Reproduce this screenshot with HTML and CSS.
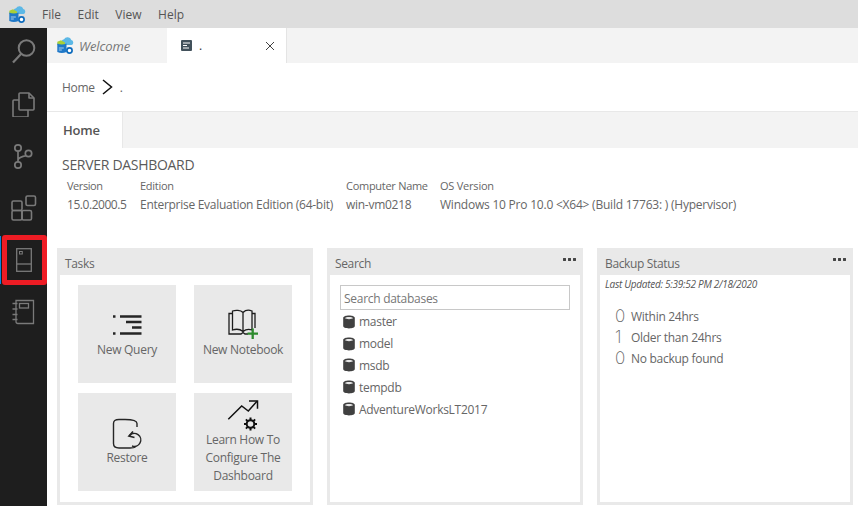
FILE: index.html
```html
<!DOCTYPE html>
<html lang="en">
<head>
<meta charset="utf-8">
<title>Server Dashboard</title>
<link rel="stylesheet" href="styles.css">
</head>
<body>
<svg class="defs" width="0" height="0" aria-hidden="true">
  <defs>
    <symbol id="logo" viewBox="0 0 17 17">
      <path d="M5.500 8A3.200 3.200 0 0 1 7 2.300 4 4 0 0 1 14.300 3 2.600 2.600 0 0 1 14.500 8z" fill="#5cb8e6"/>
      <path d="M.3 4.800 4 3.300 8 5.500V8H.3z" fill="#a9cf38"/>
      <path d="M.3 6.500Q4.800 8.500 9.500 6.500V15Q4.800 17.200.3 15z" fill="#1f78c8"/>
      <path d="M1.800 11h5M1.800 13h3" stroke="#cfe6f7" stroke-width=".8"/>
      <circle cx="12.500" cy="13.500" r="2.600" fill="#fff" stroke="#0f6cbd" stroke-width="1.700"/>
    </symbol>
    <symbol id="db" viewBox="0 0 14 14">
      <path d="M1.200 3C1.200 1.500 3.800.6 7 .6s5.800.9 5.800 2.400v8c0 1.500-2.600 2.400-5.800 2.400s-5.800-.9-5.800-2.400z" fill="#404040"/>
      <path d="M2.800 3.100C3.500 2.500 5 2 7 2s3.500.5 4.200 1.100C10.500 3.800 9 4.200 7 4.200S3.500 3.800 2.800 3.100z" fill="#e8e8e8"/>
    </symbol>
  </defs>
</svg>
<header class="menubar">
  <svg class="menu-logo"><use href="#logo"/></svg>
  <span class="menu-item">File</span>
  <span class="menu-item">Edit</span>
  <span class="menu-item">View</span>
  <span class="menu-item">Help</span>
</header>
<div class="app">
  <nav class="activity">
    <div class="act">
      <svg width="28" height="28" viewBox="0 0 28 28" fill="none" stroke="#7a7a7a" stroke-width="2"><circle cx="16.500" cy="10" r="7.800"/><path d="M11 16 3 24.500" stroke-width="2.200"/></svg>
    </div>
    <div class="act">
      <svg width="26" height="26" viewBox="0 0 26 26" fill="none" stroke="#7a7a7a" stroke-width="1.600" stroke-linejoin="round"><path d="M8 3a1 1 0 0 1 1-1h9l5 5v11a1 1 0 0 1-1 1h-13a1 1 0 0 1-1-1z"/><path d="M18 2v5h5"/><path d="M8 9H3a1 1 0 0 0-1 1v15a1 1 0 0 0 1 1h13a1 1 0 0 0 1-1v-6"/></svg>
    </div>
    <div class="act">
      <svg width="24" height="28" viewBox="0 0 24 28" fill="none" stroke="#7a7a7a" stroke-width="1.700"><circle cx="6" cy="6" r="3.200"/><circle cx="6" cy="23" r="3.200"/><circle cx="16.500" cy="11.500" r="3.200"/><path d="M6 9.200v10.600M6 18.500c0-3.500 4-3.500 8-5"/></svg>
    </div>
    <div class="act">
      <svg width="26" height="26" viewBox="0 0 26 26" fill="none" stroke="#7a7a7a" stroke-width="1.600" stroke-linejoin="round"><rect x="1" y="6" width="10" height="9.500" rx="1.500"/><rect x="1" y="15.500" width="10" height="9.500" rx="1.500"/><rect x="11" y="15.500" width="9.500" height="9.500" rx="1.500"/><rect x="15" y="1" width="9.500" height="9.500" rx="1.500"/></svg>
    </div>
    <div class="act act-current">
      <svg width="16" height="24" viewBox="0 0 16 24" fill="none" stroke="#7a7a7a" stroke-width="1.300"><rect x=".7" y=".7" width="14.600" height="22.600"/><path d="M.7 16h14.600"/><rect x="3.500" y="3.500" width="2.800" height="2.500" stroke-width="1"/></svg>
    </div>
    <div class="act">
      <svg width="24" height="26" viewBox="0 0 24 26" fill="none" stroke="#7a7a7a" stroke-width="1.300"><path d="M4 1.500h17.500v23h-15.500a2 2 0 0 1-2-2z"/><rect x="7.500" y="4.500" width="9" height="4.500"/><path d="M.5 4.500h5M.5 10h5M.5 15.500h5M.5 20.500h5"/></svg>
    </div>
  </nav>
  <main class="editor">
    <div class="tabs">
      <div class="tab tab-welcome">
        <svg class="tab-logo"><use href="#logo"/></svg>
        <span>Welcome</span>
      </div>
      <div class="tab tab-active">
        <svg width="11" height="11" viewBox="0 0 11 11"><rect width="11" height="11" rx="1" fill="#42515b"/><path d="M2 3h7M2 5.500h4M2 8h6" stroke="#fff"/></svg>
        <span class="tab-name">.</span>
        <svg class="tab-close" width="10" height="10" viewBox="0 0 10 10" stroke="#424242" stroke-width="1"><path d="M1 1l8 8M9 1l-8 8"/></svg>
      </div>
    </div>
    <div class="crumbs">
      <span>Home</span>
      <svg width="11" height="16" viewBox="0 0 11 16" fill="none" stroke="#111" stroke-width="1.500"><path d="M1 1l8.500 7-8.500 7"/></svg>
      <span>.</span>
    </div>
    <div class="subtabs"><div class="subtab">Home</div></div>
    <section class="summary">
      <h1>SERVER DASHBOARD</h1>
      <div class="props">
        <div class="prop prop-version"><span>Version</span><span>15.0.2000.5</span></div>
        <div class="prop prop-edition"><span>Edition</span><span>Enterprise Evaluation Edition (64-bit)</span></div>
        <div class="prop prop-computer"><span>Computer Name</span><span>win-vm0218</span></div>
        <div class="prop prop-os"><span>OS Version</span><span>Windows 10 Pro 10.0 &lt;X64&gt; (Build 17763: ) (Hypervisor)</span></div>
      </div>
    </section>
    <section class="widgets">
      <article class="widget">
        <div class="widget-head"><span>Tasks</span></div>
        <div class="widget-body tasks">
          <div class="task">
            <svg class="task-icon" viewBox="0 0 32 30" fill="none" stroke="#252525" stroke-width="2.300"><path d="M2 9.500h2.500M2 26.500h2.500"/><path d="M9 9.500h21.500M15 15h15.500M21 20.500h9.500M9 26.500h21.500"/></svg>
            <span>New Query</span>
          </div>
          <div class="task">
            <svg class="task-icon" viewBox="0 0 32 30" fill="none" stroke="#1c1c1c" stroke-width="1.300"><path d="M16 5.500C13.500 3 8.500 3 5.500 4v19c3-1 7.500-1 10.500 1.500 3-2.500 6.500-2.500 9-1.500V4c-2.500-1-6.500-1-9 1.500zM16 5.500v19"/><path d="M5.500 6.500H2V27h12l2-1.500 2 1.500h3"/><path d="M25 6.500h3V21"/><path d="M25.700 21.500v10.500M20.500 26.700h10.500" stroke="#2d8a2d" stroke-width="2.300"/></svg>
            <span>New Notebook</span>
          </div>
          <div class="task">
            <svg class="task-icon" viewBox="0 0 32 30" fill="none" stroke="#252525" stroke-width="1.400"><path d="M26 12V8.500C26 5.500 22 4.500 14 4.500H8C4 4.500 2.500 6 2.500 8.500v20C2.500 32 5 33 8 33h11c3 0 4.500-.3 5.500-1"/><path d="M18.500 20.500A6.500 6.500 0 1 1 21 31"/><path d="M22 16.500l-4 4.500 5.500 1.500" stroke-width="1.700"/></svg>
            <span>Restore</span>
          </div>
          <div class="task task-learn">
            <svg class="task-icon" viewBox="0 0 34 30" fill="none" stroke="#111" stroke-width="1.500"><path d="M2.300 20.300 15.700 7l6.600 5L31 2.300"/><path d="M23 2h8.500v7.700"/><path d="M24.500 18.500v13M18 25h13M19.900 20.400l9.200 9.200M29.100 20.400l-9.200 9.200" stroke-width="2"/><circle cx="24.500" cy="25" r="3.800" fill="#e9e9e9" stroke-width="2"/></svg>
            <span>Learn How To<br>Configure The<br>Dashboard</span>
          </div>
        </div>
      </article>
      <article class="widget">
        <div class="widget-head"><span>Search</span><span class="dots"></span></div>
        <div class="widget-body search">
          <input class="search-box" type="text" placeholder="Search databases">
          <ul class="dbs">
            <li><svg class="db"><use href="#db"/></svg>master</li>
            <li><svg class="db"><use href="#db"/></svg>model</li>
            <li><svg class="db"><use href="#db"/></svg>msdb</li>
            <li><svg class="db"><use href="#db"/></svg>tempdb</li>
            <li><svg class="db"><use href="#db"/></svg>AdventureWorksLT2017</li>
          </ul>
        </div>
      </article>
      <article class="widget">
        <div class="widget-head"><span>Backup Status</span><span class="dots"></span></div>
        <div class="widget-body backup">
          <p class="updated">Last Updated: 5:39:52 PM 2/18/2020</p>
          <div class="stats">
            <div class="stat"><b>0</b><span>Within 24hrs</span></div>
            <div class="stat"><b>1</b><span>Older than 24hrs</span></div>
            <div class="stat"><b>0</b><span>No backup found</span></div>
          </div>
        </div>
      </article>
    </section>
  </main>
</div>
</body>
</html>
```
FILE: styles.css
```css
* { box-sizing: border-box; }
html, body { margin: 0; height: 100%; }
body {
  width: 858px;
  height: 506px;
  overflow: hidden;
  display: flex;
  flex-direction: column;
  font-family: "Open Sans", "Noto Sans", sans-serif;
  font-size: 12px;
  letter-spacing: -0.28px;
  color: #666;
  background: #fff;
}
.defs { position: absolute; }

.menubar {
  flex: 0 0 28px;
  display: flex;
  align-items: center;
  background: #dddddd;
  padding-left: 9px;
  color: #555;
  letter-spacing: 0;
}
.menu-logo { width: 17px; height: 17px; margin-right: 16px; }
.menu-item { margin-right: 16.5px; }

.app { flex: 1; display: flex; min-height: 0; }

.activity {
  flex: 0 0 47px;
  background: #1e1e1e;
  display: flex;
  flex-direction: column;
  gap: 4px;
}
.act {
  position: relative;
  height: 48px;
  display: flex;
  align-items: center;
  justify-content: center;
}
.act-current { box-shadow: inset 1px 0 0 #0a84e0; }
.act-current::after {
  content: "";
  position: absolute;
  left: 2px;
  right: 0;
  top: -1px;
  bottom: -1px;
  border: 5.500px solid #ed1c24;
  border-radius: 3px;
}

.editor { flex: 1; min-width: 0; display: flex; flex-direction: column; }

.tabs { flex: 0 0 35px; display: flex; background: #f3f3f3; }
.tab {
  width: 120px;
  display: flex;
  align-items: center;
  border-right: 1px solid #f3f3f3;
}
.tab-welcome {
  padding-left: 10px;
  gap: 5px;
  font-size: 13px;
  font-style: italic;
  letter-spacing: -0.1px;
  color: #777;
}
.tab-logo { width: 17px; height: 17px; }
.tab-active {
  width: 120px;
  background: #fff;
  border-right: 1px solid #e4e4e4;
  padding: 0 11px 0 14px;
  color: #333;
}
.tab-name { margin-left: 7px; flex: 1; }

.crumbs {
  flex: 0 0 49px;
  display: flex;
  align-items: center;
  gap: 7px;
  padding-left: 15px;
  border-bottom: 1px solid #e8e8e8;
}

.subtabs { flex: 0 0 36px; background: #f3f3f3; display: flex; }
.subtab {
  width: 76px;
  background: #fff;
  border-right: 1px solid #e8e8e8;
  display: flex;
  align-items: center;
  padding-left: 16px;
  font-size: 13px;
  font-weight: 600;
  letter-spacing: -0.2px;
  color: #555;
}

.summary { padding: 7px 0 0 15px; }
.summary h1 {
  margin: 0;
  font-size: 14px;
  font-weight: 400;
  letter-spacing: -0.3px;
  line-height: 19px;
  color: #5a5a5a;
}
.props { display: flex; padding: 3px 0 0 5px; }
.prop { display: flex; flex-direction: column; gap: 2px; line-height: 17px; white-space: nowrap; }
.prop span:first-child { font-size: 11px; }
.prop-version { width: 73px; letter-spacing: -0.45px; }
.prop-edition { width: 206px; }
.prop-computer { width: 94px; }
.prop-os { letter-spacing: -0.22px; }

.widgets {
  flex: 1;
  min-height: 0;
  display: flex;
  gap: 14px;
  padding: 35px 0 1px 10px;
}
.widget {
  width: 256px;
  display: flex;
  flex-direction: column;
  background: #e9e9e9;
  padding: 0 3px 3px;
}
.widget-head {
  flex: 0 0 27px;
  display: flex;
  align-items: center;
  justify-content: space-between;
  padding: 4px 4px 0 5px;
  letter-spacing: -0.35px;
}
.dots {
  align-self: flex-start;
  margin-top: 6px;
  width: 13px;
  height: 3px;
  background: radial-gradient(circle at 1.500px 1.500px, #444 1.400px, transparent 1.600px) 0 0 / 5px 3px repeat-x;
}
.widget-body { flex: 1; background: #fff; min-height: 0; }

.tasks {
  display: grid;
  grid-template-columns: 98px 98px;
  grid-auto-rows: 98px;
  gap: 10px 18px;
  padding: 10px 0 0 18px;
}
.task {
  background: #e9e9e9;
  display: flex;
  flex-direction: column;
  align-items: center;
  padding-top: 22px;
  text-align: center;
  line-height: 18px;
}
.task-icon { width: 32px; height: 30px; margin-bottom: 4px; overflow: visible; flex: none; }
.task-learn { padding-top: 6px; }
.task-learn .task-icon { width: 34px; margin-bottom: 2px; }

.search { padding: 10px 10px 0; }
.search-box {
  display: block;
  width: 230px;
  height: 25px;
  border: 1px solid #c8c8c8;
  padding: 2px 3px 0;
  font: inherit;
  letter-spacing: inherit;
  outline: none;
  background: #fff;
}
.search-box::placeholder { color: #777; opacity: 1; }
.dbs { list-style: none; margin: 1px 0 0; padding: 0; }
.dbs li { display: flex; align-items: center; height: 21.8px; gap: 3px; padding-left: 2px; }
.db { width: 14px; height: 14px; flex: none; }

.updated {
  margin: 0;
  padding: 2px 0 0 5px;
  font-size: 10px;
  font-style: italic;
  letter-spacing: -0.27px;
  line-height: 14px;
  color: #555;
}
.stats { padding: 15px 0 0 15px; }
.stat { display: flex; align-items: center; height: 21px; gap: 5px; }
.stat b {
  width: 11px;
  font-family: Inter, sans-serif;
  font-weight: 200;
  font-size: 17px;
  letter-spacing: 0;
  line-height: 21px;
}
```
